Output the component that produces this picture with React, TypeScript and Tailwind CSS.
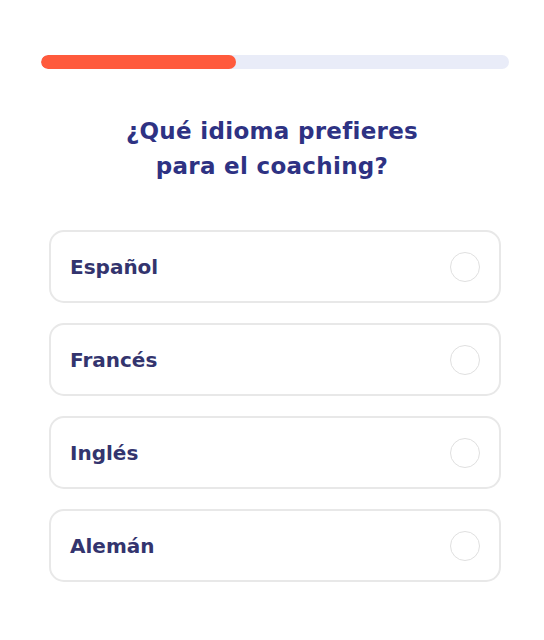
export default function App() {
  const options = ["Español", "Francés", "Inglés", "Alemán"];
  return (
    <div className="w-[544px] h-[640px] bg-white" style={{ fontFamily: "'DejaVu Sans', 'Noto Sans', sans-serif" }}>
      <div className="pt-[55px] pl-[41px]">
        <div className="h-[14px] w-[468px] rounded-full bg-[#e9ecf8] overflow-hidden">
          <div className="h-full w-[195px] rounded-full bg-[#ff5a3c]" />
        </div>
      </div>
      <h1 className="mt-[45px] text-center text-[23px] leading-[35px] tracking-[0.3px] font-bold text-[#2e3283]">
        ¿Qué idioma prefieres
        <br />
        para el coaching?
      </h1>
      <div className="mt-[46px] pl-[49px] flex flex-col gap-[20px]">
        {options.map((o) => (
          <div
            key={o}
            className="w-[452px] h-[73px] rounded-[15px] border-2 border-[#e8e8e8] flex items-center justify-between pl-[19px] pr-[19px]"
          >
            <span className="text-[20px] font-bold text-[#33346e]">{o}</span>
            <span className="w-[30px] h-[30px] rounded-full border-[1.5px] border-[#e0e0e0]" />
          </div>
        ))}
      </div>
    </div>
  );
}
